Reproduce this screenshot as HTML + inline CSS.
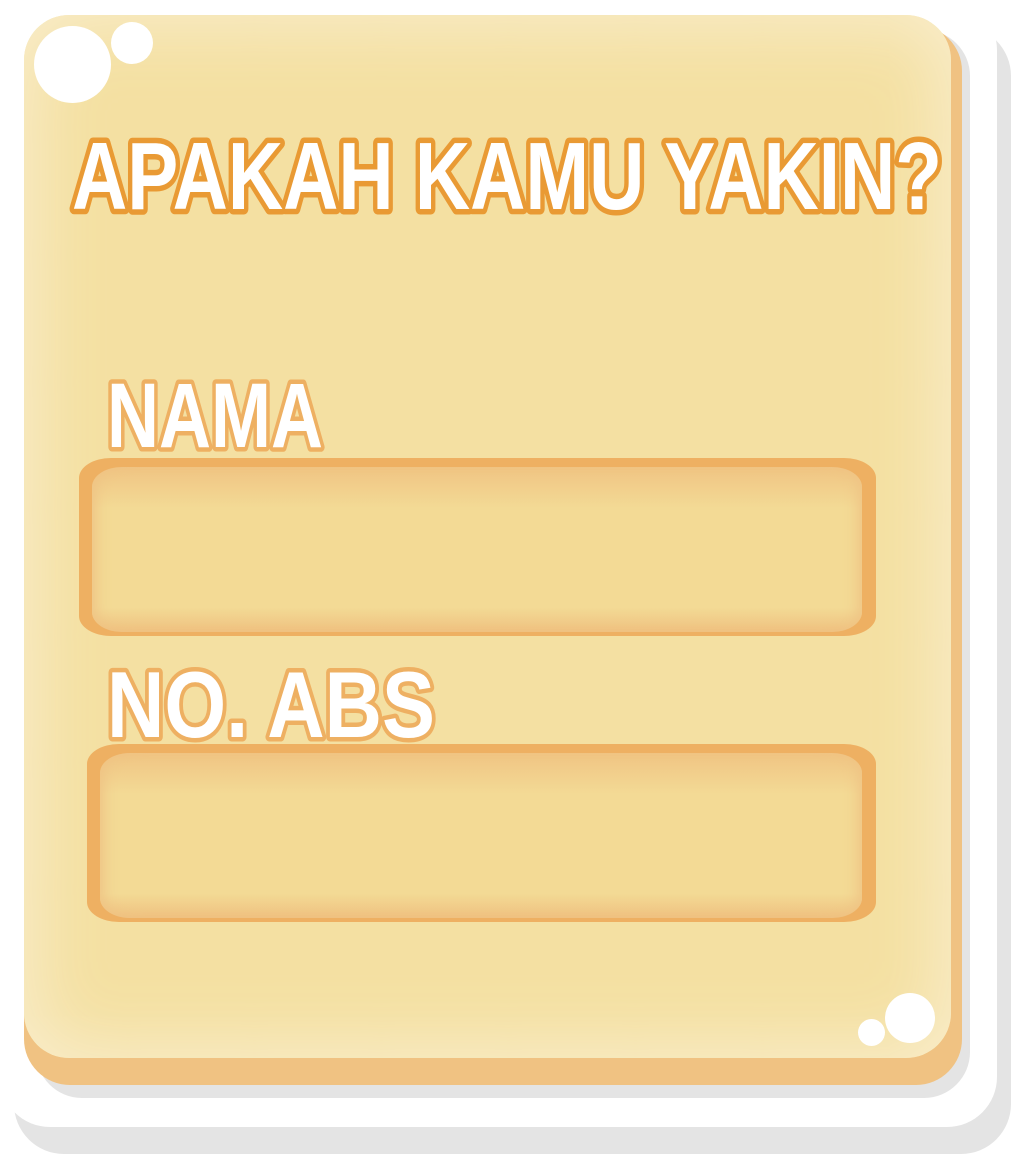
<!DOCTYPE html>
<html><head><style>
html,body{margin:0;padding:0;width:1011px;height:1154px;overflow:hidden;background:#fff}
div{position:absolute;box-sizing:border-box}
</style></head><body>
<div style="left:14px;top:26px;width:997px;height:1128px;background:#e4e4e4;border-radius:50px"></div>
<div style="left:0;top:0;width:997px;height:1127px;background:#fff;border-radius:50px"></div>
<div style="left:36px;top:30px;width:934px;height:1068px;background:#e4e4e4;border-radius:46px"></div>
<div style="left:24px;top:25px;width:938px;height:1060px;background:#f0c282;border-radius:46px"></div>
<div style="left:24px;top:15px;width:927px;height:1043px;border-radius:45px;background:#f4e0a2;box-shadow:inset 0 0 70px 10px #f9edcc"></div>
<div style="left:34px;top:26px;width:77px;height:77px;border-radius:50%;background:#fff"></div>
<div style="left:111px;top:22px;width:42px;height:42px;border-radius:50%;background:#fff"></div>
<div style="left:885px;top:993px;width:50px;height:50px;border-radius:50%;background:#fff"></div>
<div style="left:858px;top:1019px;width:27px;height:27px;border-radius:50%;background:#fff"></div>

<div style="left:79px;top:458px;width:797px;height:178px;background:#eeb062;border-radius:32px/20px"></div>
<div style="left:92px;top:467px;width:770px;height:165px;border-radius:30px/20px;background:linear-gradient(#f0c483,#f3da95 25%,#f3da95 85%,#efc180);box-shadow:inset 12px 0 14px -8px #efc384,inset -12px 0 14px -8px #efc384"></div>
<div style="left:87px;top:744px;width:789px;height:178px;background:#eeb062;border-radius:32px/20px"></div>
<div style="left:100px;top:753px;width:762px;height:165px;border-radius:30px/20px;background:linear-gradient(#f0c483,#f3da95 25%,#f3da95 85%,#efc180);box-shadow:inset 12px 0 14px -8px #efc384,inset -12px 0 14px -8px #efc384"></div>

<svg width="1011" height="1154" style="position:absolute;left:0;top:0" font-family="Liberation Sans, sans-serif" font-weight="bold">
<text x="72" y="209" font-size="96" textLength="870" lengthAdjust="spacingAndGlyphs" fill="#fff" stroke="#e99a34" stroke-width="11" stroke-linejoin="round" paint-order="stroke">APAKAH KAMU YAKIN?</text>
<text x="107" y="447" font-size="92" textLength="216" lengthAdjust="spacingAndGlyphs" fill="#fff" stroke="#eeb062" stroke-width="9" stroke-linejoin="round" paint-order="stroke">NAMA</text>
<text x="107" y="737" font-size="94" textLength="328" lengthAdjust="spacingAndGlyphs" fill="#fff" stroke="#eeb062" stroke-width="9" stroke-linejoin="round" paint-order="stroke">NO. ABS</text>
</svg>
</body></html>
